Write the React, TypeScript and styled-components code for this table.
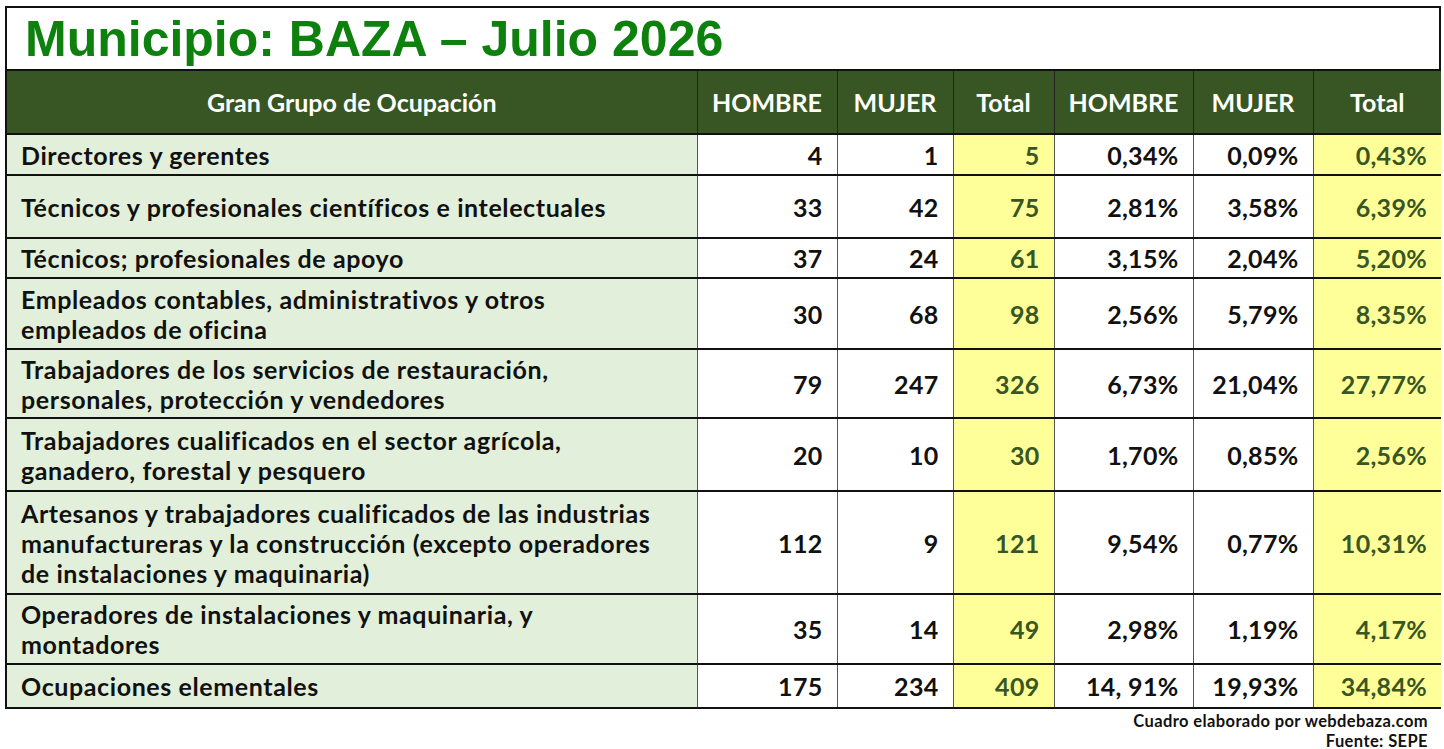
import React from "react";
import styled, {createGlobalStyle} from "styled-components";

const GlobalStyle = createGlobalStyle`
  html, body {
    margin: 0;
    padding: 0;
    background: #ffffff;
  }
  body {
    font-family: 'Lato', 'Liberation Sans', sans-serif;
    color: #111;
  }
`

const Page = styled.div`
  padding: 6px 0 0 5px;
  width: 1436px;
`

const Frame = styled.div`
  border: 2px solid #111;
  background: #fff;
`

const Title = styled.h1`
  margin: 0;
  height: 61px;
  display: flex;
  align-items: center;
  padding-left: 18px;
  font-family: 'Liberation Sans', Arial, sans-serif;
  font-weight: 700;
  font-size: 50px;
  color: #0e800e;
  border-bottom: 2px solid #111;
`

const Table = styled.table`
  width: 100%;
  border-collapse: collapse;
  table-layout: fixed;
`

const HeadCell = styled.th`
  height: 62px;
  padding: 0;
  background: #375623;
  color: #fff;
  font-weight: 700;
  font-size: 25px;
  text-align: center;
  border-left: 1px solid #222;
  border-bottom: 2px solid #111;
  &:first-child {
    border-left: none;
  }
`

const Row = styled.tr<{ $h: number }>`
  height: ${p => p.$h}px;
  border-top: 2px solid #111;
  &:first-child {
    border-top: none;
  }
`

const NameCell = styled.td`
  padding: 0 8px 0 14px;
  background: #e2efda;
  font-weight: 700;
  font-size: 25px;
  letter-spacing: 0.6px;
  line-height: 30px;
  white-space: pre-line;
  vertical-align: middle;
`

const NumCell = styled.td<{ $total?: boolean }>`
  padding: 0 14px 0 0;
  text-align: right;
  background: ${p => p.$total ? '#ffff99' : '#fff'};
  color: ${p => p.$total ? '#375623' : '#111'};
  font-weight: 700;
  font-size: 25px;
  letter-spacing: 0.3px;
  border-left: 1px solid #555;
  vertical-align: middle;
`

const Footer = styled.div`
  padding: 2px 13px 0 0;
  text-align: right;
  font-weight: 700;
  font-size: 16.5px;
  letter-spacing: 0.4px;
  line-height: 20px;
  color: #111;
`

type Ocupacion = {
  name: string,
  h: number,
  values: string[],
}

const columns = ['HOMBRE', 'MUJER', 'Total', 'HOMBRE', 'MUJER', 'Total']
const widths = [690, 140, 116, 101, 139, 120, 128]

const rows: Ocupacion[] = [
  {name: 'Directores y gerentes', h: 41, values: ['4', '1', '5', '0,34%', '0,09%', '0,43%']},
  {name: 'Técnicos y profesionales científicos e intelectuales', h: 63, values: ['33', '42', '75', '2,81%', '3,58%', '6,39%']},
  {name: 'Técnicos; profesionales de apoyo', h: 40, values: ['37', '24', '61', '3,15%', '2,04%', '5,20%']},
  {name: 'Empleados contables, administrativos y otros\nempleados de oficina', h: 71, values: ['30', '68', '98', '2,56%', '5,79%', '8,35%']},
  {name: 'Trabajadores de los servicios de restauración,\npersonales, protección y vendedores', h: 69, values: ['79', '247', '326', '6,73%', '21,04%', '27,77%']},
  {name: 'Trabajadores cualificados en el sector agrícola,\nganadero, forestal y pesquero', h: 73, values: ['20', '10', '30', '1,70%', '0,85%', '2,56%']},
  {name: 'Artesanos y trabajadores cualificados de las industrias\nmanufactureras y la construcción (excepto operadores\nde instalaciones y maquinaria)', h: 103, values: ['112', '9', '121', '9,54%', '0,77%', '10,31%']},
  {name: 'Operadores de instalaciones y maquinaria, y\nmontadores', h: 70, values: ['35', '14', '49', '2,98%', '1,19%', '4,17%']},
  {name: 'Ocupaciones elementales', h: 43, values: ['175', '234', '409', '14, 91%', '19,93%', '34,84%']},
]

const App = () => {
  return (
    <Page>
      <GlobalStyle/>
      <Frame>
        <Title>Municipio: BAZA – Julio 2026</Title>
        <Table>
          <colgroup>
            {widths.map((w, i) => <col key={i} style={{width: w}}/>)}
          </colgroup>
          <thead>
            <tr>
              <HeadCell>Gran Grupo de Ocupación</HeadCell>
              {columns.map((c, i) => <HeadCell key={i}>{c}</HeadCell>)}
            </tr>
          </thead>
          <tbody>
            {rows.map((r) => (
              <Row key={r.name} $h={r.h}>
                <NameCell>{r.name}</NameCell>
                {r.values.map((v, i) => (
                  <NumCell key={i} $total={i === 2 || i === 5}>{v}</NumCell>
                ))}
              </Row>
            ))}
          </tbody>
        </Table>
      </Frame>
      <Footer>
        <div>Cuadro elaborado por webdebaza.com</div>
        <div>Fuente: SEPE</div>
      </Footer>
    </Page>
  )
}

export default App
